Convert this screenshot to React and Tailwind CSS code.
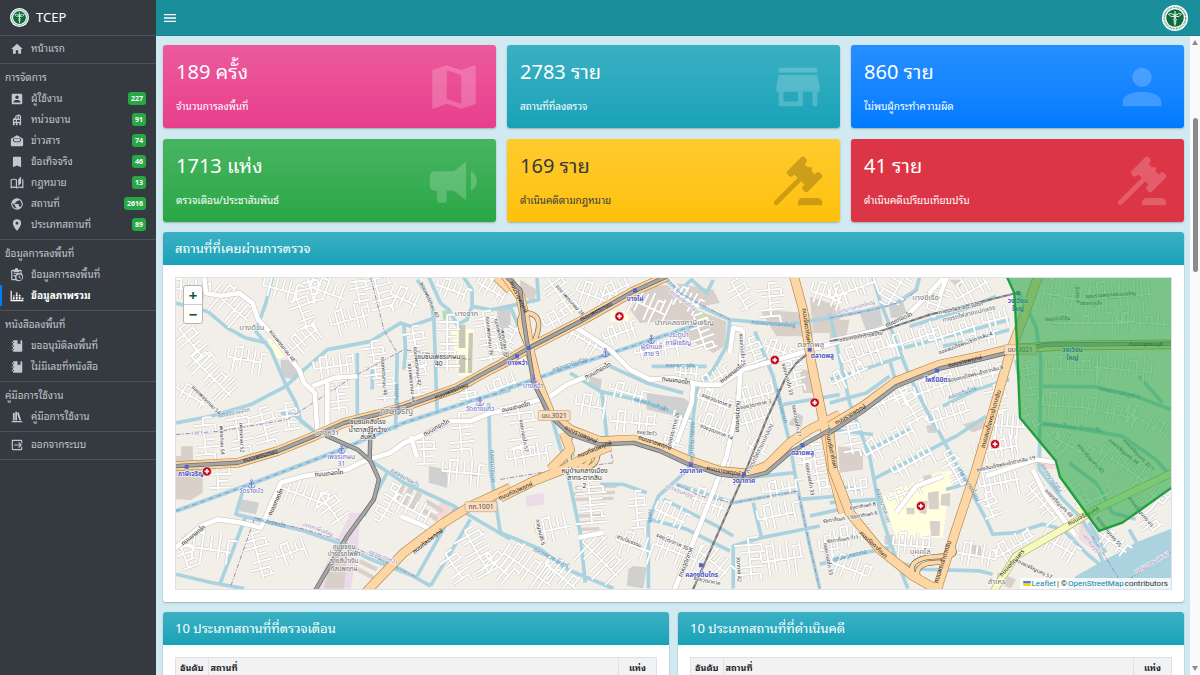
import React, { useState } from 'react';

const ICONS = {
    home: 'M10,20V14H14V20H19V12H22L12,3L2,12H5V20H10Z',
    users: 'M6,17C6,15 10,13.9 12,13.9C14,13.9 18,15 18,17V18H6M15,9A3,3 0 0,1 12,12A3,3 0 0,1 9,9A3,3 0 0,1 12,6A3,3 0 0,1 15,9M3,5V19A2,2 0 0,0 5,21H19A2,2 0 0,0 21,19V5A2,2 0 0,0 19,3H5C3.89,3 3,3.9 3,5Z',
    building: 'M5 21V10L9 8V5L15 2L19 5V21H16V17H13V21H10V17H8V21H5M7 12V15H10V12H7M12 12V15H17V12H12M11 6V10H13V5L11 6M15 5V10H17V6L15 5Z',
    news: 'M12 2L1.5 8V19A2 2 0 0 0 3.5 21H20.5A2 2 0 0 0 22.5 19V8L12 2M5 7.500H19V11.500L16 14H8L5 11.500V7.500M6.500 8.500V11L9 13H15L17.500 11V8.500H6.500Z',
    bookmark: 'M17,3H7A2,2 0 0,0 5,5V21L12,18L19,21V5C19,3.89 18.1,3 17,3Z',
    law: 'M19 1L14 6V17L19 12.5V1M21 5V18.5C19.9 18.15 18.7 18 17.5 18C15.8 18 13.35 18.65 12 19.5V6C10.55 4.9 8.45 4.5 6.5 4.5C4.55 4.5 2.45 4.9 1 6V20.65C1 20.9 1.25 21.15 1.5 21.15C1.6 21.15 1.65 21.1 1.75 21.1C3.1 20.45 5.05 20 6.5 20C8.45 20 10.55 20.4 12 21.5C13.35 20.65 15.8 20 17.5 20C19.15 20 20.85 20.3 22.25 21.05C22.35 21.1 22.4 21.1 22.5 21.1C22.75 21.1 23 20.85 23 20.6V6C22.4 5.55 21.75 5.25 21 5M10 18.41C8.75 18.09 7.5 18 6.5 18C5.44 18 4.18 18.19 3 18.5V7.13C3.91 6.73 5.14 6.5 6.5 6.5C7.86 6.5 9.09 6.73 10 7.13V18.41Z',
    earth: 'M17.9,17.39C17.64,16.59 16.89,16 16,16H15V13A1,1 0 0,0 14,12H8V10H10A1,1 0 0,0 11,9V7H13A2,2 0 0,0 15,5V4.59C17.93,5.77 20,8.64 20,12C20,14.08 19.2,15.97 17.9,17.39M11,19.93C7.05,19.44 4,16.08 4,12C4,11.38 4.08,10.78 4.21,10.21L9,15V16A2,2 0 0,0 11,18M12,2A10,10 0 0,0 2,12A10,10 0 0,0 12,22A10,10 0 0,0 22,12A10,10 0 0,0 12,2Z',
    marker: 'M12,11.5A2.5,2.5 0 0,1 9.5,9A2.5,2.5 0 0,1 12,6.5A2.5,2.5 0 0,1 14.5,9A2.5,2.5 0 0,1 12,11.5M12,2A7,7 0 0,0 5,9C5,14.25 12,22 12,22C12,22 19,14.25 19,9A7,7 0 0,0 12,2Z',
    visits: 'M4 3H8A3 3 0 0 1 14 3H18A2 2 0 0 1 20 5V9.600A7 7 0 1 1 10 21H4A2 2 0 0 1 2 19V5A2 2 0 0 1 4 3M4 5V19H9.100A7 7 0 0 1 9 14H6V12H10A7 7 0 0 1 12 10H6V8H16V9H18V5H16V7H6V5H4M16 11A5 5 0 1 0 16 21A5 5 0 0 0 16 11M15 12.500H16.500V15.800L19 17.300L18.200 18.500L15 16.600V12.500Z',
    chart: 'M1 3H3V19H23V21H1V3M5 11H8V13H5V11M5 14H8V18H5V14M10 6H13V8H10V6M10 9H13V12H10V9M10 13H13V18H10V13M15 10H18V12H15V10M15 13H18V18H15V13M20 15H23V18H20V15Z',
    notebook: 'M3,7V5H5V4C5,2.89 5.9,2 7,2H13V9L15.5,7.5L18,9V2H19C20.05,2 21,2.95 21,4V20C21,21.05 20.05,22 19,22H7C5.95,22 5,21.05 5,20V19H3V17H5V13H3V11H5V7H3M7,11H5V13H7V11M7,7V5H5V7H7M7,19V17H5V19H7Z',
    shelf: 'M9 3V18H12V3H9M12 5L16 18L19 17L15 4L12 5M5 5V18H8V5H5M3 19V21H21V19H3Z',
    logout: 'M14.08,15.59L16.67,13H7V11H16.67L14.08,8.41L15.5,7L20.5,12L15.5,17L14.08,15.59M19,3A2,2 0 0,1 21,5V9.67L19,7.67V5H5V19H19V16.33L21,14.33V19A2,2 0 0,1 19,21H5C3.89,21 3,20.1 3,19V5C3,3.89 3.89,3 5,3H19Z',
    menu: 'M3,6H21V8H3V6M3,11H21V13H3V11M3,16H21V18H3V16Z',
    map: 'M15,19L9,16.89V5L15,7.11M20.5,3C20.44,3 20.39,3 20.34,3L15,5.1L9,3L3.36,4.9C3.15,4.97 3,5.15 3,5.38V20.5A0.5,0.5 0 0,0 3.5,21C3.55,21 3.61,21 3.66,20.97L9,18.9L15,21L20.64,19.1C20.85,19 21,18.85 21,18.62V3.5A0.5,0.5 0 0,0 20.5,3Z',
    store: 'M12,18H6V14H12M21,14V12L20,7H4L3,12V14H4V20H14V14H18V20H20V14M20,4H4V6H20V4Z',
    person: 'M12,4A4,4 0 0,1 16,8A4,4 0 0,1 12,12A4,4 0 0,1 8,8A4,4 0 0,1 12,4M12,14C16.42,14 20,15.79 20,18V20H4V18C4,15.79 7.58,14 12,14Z',
    horn: 'M12,8H4A2,2 0 0,0 2,10V14A2,2 0 0,0 4,16H5V20A1,1 0 0,0 6,21H8A1,1 0 0,0 9,20V16H12L17,20V4L12,8M21.5,12C21.5,13.71 20.54,15.26 19,16V8C20.53,8.75 21.5,10.3 21.5,12Z',
    gavel: 'M2.3,20.28L11.9,10.68L10.5,9.26L9.78,9.97C9.39,10.36 8.76,10.36 8.37,9.97L7.66,9.26C7.27,8.87 7.27,8.24 7.66,7.85L13.32,2.19C13.71,1.8 14.34,1.8 14.73,2.19L15.44,2.9C15.83,3.29 15.83,3.92 15.44,4.31L14.73,5L16.15,6.43C16.54,6.04 17.17,6.04 17.56,6.43C17.95,6.82 17.95,7.46 17.56,7.85L18.97,9.26L19.68,8.55C20.07,8.16 20.71,8.16 21.1,8.55L21.8,9.26C22.19,9.65 22.19,10.28 21.8,10.68L16.15,16.33C15.76,16.72 15.12,16.72 14.73,16.33L14.02,15.63C13.63,15.24 13.63,14.6 14.02,14.21L14.73,13.5L13.32,12.09L3.71,21.7C3.32,22.09 2.69,22.09 2.3,21.7C1.91,21.31 1.91,20.67 2.3,20.28M20,19A2,2 0 0,1 22,21V22H12V21A2,2 0 0,1 14,19H20Z',
};

const MENU = [
    { items: [{ icon: 'home', label: 'หน้าแรก' }] },
    {
        title: 'การจัดการ',
        items: [
            { icon: 'users', label: 'ผู้ใช้งาน', count: 227 },
            { icon: 'building', label: 'หน่วยงาน', count: 91 },
            { icon: 'news', label: 'ข่าวสาร', count: 74 },
            { icon: 'bookmark', label: 'ข้อเท็จจริง', count: 46 },
            { icon: 'law', label: 'กฎหมาย', count: 13 },
            { icon: 'earth', label: 'สถานที่', count: 2616 },
            { icon: 'marker', label: 'ประเภทสถานที่', count: 89 },
        ],
    },
    {
        title: 'ข้อมูลการลงพื้นที่',
        items: [
            { icon: 'visits', label: 'ข้อมูลการลงพื้นที่' },
            { icon: 'chart', label: 'ข้อมูลภาพรวม', active: true },
        ],
    },
    {
        title: 'หนังสือลงพื้นที่',
        items: [
            { icon: 'notebook', label: 'ขออนุมัติลงพื้นที่' },
            { icon: 'notebook', label: 'ไม่มีเลขที่หนังสือ' },
        ],
    },
    { title: 'คู่มือการใช้งาน', items: [{ icon: 'shelf', label: 'คู่มือการใช้งาน' }] },
    { items: [{ icon: 'logout', label: 'ออกจากระบบ' }] },
];

const STATS = [
    { value: '189 ครั้ง', label: 'จำนวนการลงพื้นที่', icon: 'map', tone: 'from-[#ec5a9d] to-[#e83e8c] text-white', iconTone: 'text-white/20' },
    { value: '2783 ราย', label: 'สถานที่ที่ลงตรวจ', icon: 'store', tone: 'from-[#3ab0c3] to-[#17a2b8] text-white', iconTone: 'text-white/20' },
    { value: '860 ราย', label: 'ไม่พบผู้กระทำความผิด', icon: 'person', tone: 'from-[#268fff] to-[#007bff] text-white', iconTone: 'text-white/20' },
    { value: '1713 แห่ง', label: 'ตรวจเตือน/ประชาสัมพันธ์', icon: 'horn', tone: 'from-[#48b461] to-[#28a745] text-white', iconTone: 'text-white/20' },
    { value: '169 ราย', label: 'ดำเนินคดีตามกฎหมาย', icon: 'gavel', tone: 'from-[#ffca2c] to-[#ffc107] text-[#343a40]', iconTone: 'text-black/20' },
    { value: '41 ราย', label: 'ดำเนินคดีเปรียบเทียบปรับ', icon: 'gavel', tone: 'from-[#dc3545] to-[#dc3545] text-white', iconTone: 'text-white/20' },
];

// Three map sheets side by side, each with its own origin.
// streets: [x, y, angle, length, depth, step]
// labels: [x, y, angle, text, kind]
const SHEETS = [
    {
        x: -15,
        areas: [
            ['#ffffe0', 'M290 210L320 190L345 260L310 270Z'],
            ['#ffffe0', 'M840 170L910 180L905 320L865 320Z'],
            ['#ebdbe8', 'M540 730L570 730L560 850L540 958L430 958Z'],
            ['#d9d0c9', 'M480 870L530 850L520 958L460 958ZM15 560L30 560L30 530L65 530L68 600L95 600L95 670L60 692L15 690Z'],
            ['#d0d0d0', 'M330 270L380 270L385 300L370 330L330 320ZM210 690L265 700L255 735L205 725ZM775 590L830 600L830 655L775 640ZM980 120L1020 110L1020 175L985 175Z'],
            ['#c7c7b8', 'M865 165L885 165L885 235L865 235ZM865 255L885 255L885 310L865 310ZM895 190L908 190L905 310L892 310Z'],
            ['#f2dad9', 'M810 690L850 720L830 750L795 740Z'],
            ['#aedfb7', 'M815 122L835 122L835 150L818 150Z'],
            ['#d9d0c9', 'M690 640L705 650L680 700L665 690ZM715 650L730 660L705 710L690 700ZM740 665L755 675L730 725L715 715ZM770 690L820 720L815 732L765 702ZM760 715L805 745L798 757L753 727ZM570 870L622 895L616 907L564 882ZM565 895L612 920L606 932L559 907Z'],
        ],
        canals: [
            'M305 22L285 100L255 185L300 240L345 345L375 400L390 455L430 485',
            'M15 100L110 125L170 175L225 205L290 220',
            'M15 460L120 440L240 405L345 350L400 300L470 240L600 215L690 160L720 170L790 145L780 90L740 30',
            'M700 165L705 240L700 300', 'M790 140L800 430', 'M560 250L560 450', 'M605 300L605 360', 'M680 250L675 480',
            'M775 22L810 100L835 120L860 165L890 150L905 110L960 120L1020 110', 'M905 110L905 60L880 22',
            'M220 650L195 735L400 785L500 820L600 870L740 925', 'M595 570L700 640L850 710L1020 810',
            'M650 610L580 740', 'M955 400L960 600L990 790', 'M740 920L855 715', 'M780 950L900 750',
            'M600 850L780 950', 'M145 950L225 740', 'M15 915L120 940L220 958', 'M330 430L370 435L430 485',
        ],
        ferry: ['M15 725L250 640L500 545L700 460L900 395L1020 360'],
        streets: [
            [60, 60, 5, 150, 28, 22], [180, 110, 40, 130, 45, 20], [330, 60, 15, 110, 34, 20], [390, 120, 70, 110, 30, 22],
            [470, 70, 20, 110, 36, 24], [540, 150, -15, 120, 34, 20], [620, 60, 75, 110, 38, 22], [700, 90, 25, 90, 32, 20],
            [60, 220, 50, 110, 32, 22], [120, 320, 45, 170, 38, 20], [220, 270, 10, 100, 34, 20], [60, 380, 30, 100, 26, 22],
            [400, 210, -40, 90, 28, 18], [490, 290, -8, 120, 30, 20], [610, 270, 82, 110, 30, 20], [735, 230, 80, 120, 28, 20],
            [830, 220, 90, 170, 30, 22], [950, 200, 80, 150, 32, 20], [740, 330, 84, 110, 26, 20], [640, 350, 86, 90, 28, 20],
            [100, 500, 85, 110, 34, 22], [200, 480, 80, 110, 36, 22], [280, 470, 75, 110, 32, 20], [350, 440, 80, 80, 28, 20],
            [140, 620, 88, 90, 34, 20], [400, 680, 20, 150, 36, 24], [480, 720, 55, 100, 34, 22], [260, 860, 75, 140, 34, 22],
            [110, 840, 8, 140, 44, 26], [360, 850, -20, 90, 30, 22], [760, 540, 88, 90, 30, 22], [870, 490, 85, 120, 34, 22],
            [880, 610, 5, 130, 34, 22], [720, 720, 28, 110, 34, 22], [920, 850, 60, 150, 38, 18], [850, 890, 55, 90, 28, 18],
            [980, 890, 40, 90, 34, 18], [660, 700, -60, 130, 26, 20], [40, 860, 70, 100, 28, 22], [1000, 350, -20, 90, 26, 20],
            [420, 60, 75, 90, 26, 20], [560, 60, 80, 90, 26, 20], [840, 60, 20, 90, 26, 18], [960, 60, 30, 90, 28, 18], [890, 380, 80, 60, 24, 18], [500, 370, 84, 110, 28, 20],
        ],
        roads: [
            'M100 22L105 70L150 78L205 70L245 100L262 150L300 190L385 300L400 340L432 370L440 480',
            'M425 350L490 325L560 320', 'M470 340L470 500',
            'M15 835L90 770L140 750L210 760L270 775L330 640L400 620L530 600L580 575L660 550L700 520L760 495L840 455L900 455L960 430L1020 420',
            'M720 500L740 565', 'M690 740L760 770L800 790', 'M580 575L605 575',
        ],
        majors: ['M15 590L200 580L320 545L430 500L520 460L620 435L700 412L860 355L960 300L1020 270', 'M585 970L700 850L820 760L900 710L1020 655', 'M980 22L1020 60'],
        yellow: [],
        rails: ['M15 590L200 580L320 545L430 500L520 460L620 435L700 412L860 355L960 300L1020 270', 'M465 498L560 540L600 575L625 630L610 690L530 800L430 970', 'M597 575L600 470'],
        bounds: ['M15 495L150 485L350 450L550 320L700 240L900 270', 'M180 950L250 750', 'M600 22L640 180L680 250', 'M250 745L400 780L500 810L740 925'],
        pois: [[108, 606]],
        stations: [[47, 592]],
        anchors: [[242, 645], [513, 540], [929, 397]],
        shields: [[932, 712, 'กก.1001']],
        labels: [
            [243, 180, 0, 'บางด้วน', 'place'], [888, 140, 0, 'บางจาก', 'place'], [678, 432, 0, 'ภาษีเจริญ', 'town'], [468, 498, 0, 'บางหว้า', 'place'],
            [805, 268, 0, 'ชุมชนเพชรเกษม', 'area'], [805, 290, 0, '40', 'area'],
            [592, 463, 0, 'ชุมชนคลังโรง', 'area'], [592, 486, 0, 'น้ำตาลบัวกว้าง', 'area'], [592, 508, 0, 'สุ่นหลี', 'area'],
            [520, 838, 0, 'ศูนย์ซ่อม', 'place2'], [520, 860, 0, 'บำรุงรถไฟฟ้า', 'place2'], [520, 882, 0, 'สายสีน้ำเงิน', 'place2'], [520, 904, 0, 'กัลปพฤกษ์', 'place2'],
            [60, 620, 0, 'ภาษีเจริญ', 'station'], [241, 672, 0, 'วัดรางบัว', 'pier'], [512, 570, 0, 'เพชรเกษม', 'pier'], [512, 590, 0, '31', 'pier'], [929, 423, 0, 'วัดอ่างแก้ว', 'pier'],
            [270, 565, -15, 'ถนนเพชรเกษม', 'road'], [845, 370, -22, 'ถนนเพชรเกษม', 'road'], [775, 820, -38, 'ถนนกัลปพฤกษ์', 'road'],
            [475, 617, -5, 'ถนนเทอดไท', 'road'], [800, 480, -28, 'ถนนเทอดไท', 'road'], [320, 700, -65, 'ถนนเทอดไท', 'road'], [70, 802, -38, 'ถนนเทอดไท', 'road'],
            [330, 232, 52, 'ซอยเพชรเกษม 48', 'street'], [102, 395, 45, 'ซอยเพชรเกษม 54', 'street'], [148, 512, 88, 'เพชรเกษม 54', 'street'], [207, 505, 88, 'เพชรเกษม 52', 'street'],
            [635, 320, 86, 'ซอยเพชรเกษม 46', 'street'], [718, 340, 84, 'ซอยเพชรเกษม 44', 'street'], [735, 290, 84, 'ซอยเพชรเกษม 42', 'street'], [952, 200, 84, 'ซอยเพชรเกษม 36', 'street'], [985, 205, 76, 'ซอยเพชรเกษม 34', 'street'], [772, 92, 65, 'ซอยเพชรเกษม 40', 'street'],
            [190, 435, -12, 'คลองบางจาก', 'water'], [675, 390, 88, 'คลองบางหว้า', 'water'], [300, 765, 14, 'คลองรางบัว', 'water'], [700, 630, 30, 'คลองบางหว้า', 'water'], [962, 590, 88, 'คลองบางแวก', 'water'],
            [440, 785, 20, 'เขตภาษีเจริญ', 'border'], [635, 868, 22, 'แขวงบางหว้า', 'border'],
        ],
    },
    {
        x: 975,
        areas: [
            ['#d0d0d0', 'M440 370L550 385L575 400L570 450L440 420ZM270 320L305 330L300 365L265 345ZM385 900L400 890L440 895L430 958L380 950ZM0 130L30 125L30 175L0 165ZM890 430L910 440L905 475L865 465Z'],
            ['#d9d0c9', 'M440 50L500 45L590 120L680 155L675 230L640 250L570 210L540 150L420 160L390 120ZM780 120L930 130L940 200L830 200ZM60 30L110 60L100 100L60 70ZM530 40L640 60L660 100L600 110L560 80ZM900 300L955 300L955 370L910 370ZM930 80L1020 110L1020 190L940 190Z'],
            ['#ffffe0', 'M330 125L385 125L385 155L330 155Z'],
            ['#ebdbe8', 'M75 680L130 670L132 705L80 712Z'],
            ['#aedfb7', 'M205 500L225 560L205 570ZM240 565L280 555L270 590L240 585Z'],
            ['#c8e6a0', 'M600 125L635 145L595 145Z'],
            ['#d9d0c9', 'M225 650L350 645L350 655L225 660ZM215 668L345 664L345 674L215 678ZM225 686L340 682L340 692L225 696ZM235 735L300 733L300 743L235 745ZM240 755L298 753L298 763L240 765ZM240 775L298 773L298 783L240 785Z'],
        ],
        canals: [
            'M490 22L530 60L600 110L690 150L860 165L1020 140', 'M690 150L680 230L640 300L590 360L575 480L565 600L475 680L445 760L445 958',
            'M210 310L300 365L450 400L580 455', 'M305 370L320 500', 'M330 290L440 340L550 370', 'M455 290L620 290',
            'M765 185L820 320L870 520L890 640L930 830L960 958', 'M530 645L700 700L895 665', 'M490 690L650 770L700 800',
            'M760 700L785 805L960 770', 'M700 958L700 830L785 805', 'M150 430L200 600L240 790L255 940',
            'M0 790L120 840L200 900L340 958', 'M745 625L880 610', 'M850 405L1020 375', 'M110 22L115 90L0 115', 'M30 110L75 220', 'M540 60L575 30L620 70L640 30', 'M900 690L1020 680', 'M930 740L1020 720', 'M960 885L1020 870', 'M300 645L370 645L440 670', 'M450 750L560 780L690 845',
        ],
        ferry: ['M0 365L200 295L380 235L590 165'],
        streets: [
            [180, 80, 55, 130, 34, 20], [280, 80, 20, 110, 34, 20], [350, 60, -25, 90, 26, 20], [170, 150, -28, 80, 26, 22], [440, 110, 25, 130, 40, 18],
            [600, 190, 70, 110, 34, 18], [720, 80, 60, 100, 30, 22], [810, 90, 85, 100, 34, 20], [980, 80, 20, 100, 34, 18],
            [250, 210, 30, 120, 28, 20], [360, 190, -20, 100, 26, 18], [470, 240, -10, 130, 26, 18], [560, 310, 5, 70, 20, 16],
            [380, 370, 15, 110, 24, 20], [270, 410, 10, 90, 32, 22], [400, 460, 5, 140, 30, 22], [530, 490, -75, 110, 28, 20],
            [640, 400, 20, 100, 34, 18], [650, 480, 22, 120, 34, 18], [770, 380, -15, 110, 34, 18], [770, 450, -18, 100, 30, 18],
            [760, 250, 70, 90, 26, 18], [880, 300, 75, 100, 26, 20], [60, 470, 82, 130, 40, 26], [80, 560, -10, 120, 30, 24],
            [270, 700, 85, 130, 40, 18], [160, 780, -12, 100, 36, 22], [300, 870, 45, 150, 50, 20], [400, 830, 20, 110, 34, 22],
            [80, 900, 35, 170, 46, 18], [180, 920, 40, 120, 34, 18], [410, 720, 85, 110, 24, 22], [510, 740, 25, 100, 34, 18],
            [530, 850, 22, 130, 38, 18], [620, 700, 20, 110, 34, 20], [640, 880, 40, 110, 34, 20], [750, 870, 85, 130, 36, 22],
            [850, 870, -8, 130, 44, 20], [830, 740, -12, 110, 36, 22], [840, 660, -10, 100, 24, 20], [950, 600, 80, 150, 30, 22],
            [910, 540, 85, 100, 24, 18], [990, 840, -5, 60, 40, 18], [680, 600, -70, 70, 22, 18], [30, 210, -60, 90, 22, 20], [770, 540, 30, 70, 30, 18],
            [830, 240, 20, 80, 24, 16], [560, 90, 30, 90, 28, 16], [640, 330, -30, 90, 24, 18],
        ],
        roads: [
            'M215 165L330 240L390 300L450 330L520 325L600 345L660 345L730 300L800 280L1020 215', 'M0 420L100 395L150 380L200 345L260 320L330 280',
            'M730 180L715 400L680 560L650 640L520 970', 'M730 180L700 175L690 250', 'M235 805L310 790', 'M580 340L575 400L530 520',
        ],
        majors: [
            'M0 285L85 235L250 150L400 65L500 20', 'M0 685L100 635L190 600L260 560L330 530', 'M190 490L210 540L150 600', 'M880 10L910 120L935 280L970 450L1000 620L1030 730',
            'M10 10L60 80L75 150L90 250L110 330L150 430L210 480L300 515L400 510L480 535L560 570L660 605L740 612L800 590L870 520L930 480L1020 435',
        ],
        loops: ['M78 220Q35 130 85 130Q140 140 95 230', 'M210 500Q190 600 245 600Q305 590 290 530', 'M225 570Q245 610 270 570'],
        yellow: [],
        rails: ['M0 285L85 235L250 150L400 65L500 20', 'M20 22L60 60L70 150L85 250L100 340L150 440L210 495L300 525L400 520L480 545L560 582L660 615L740 625L800 610L870 550L930 515L1020 465'],
        tracks: ['M575 970L735 610L800 450L860 320L890 280L920 255'],
        bounds: ['M0 630L180 600', 'M320 500L340 580L260 590', 'M530 645L600 680L700 700L895 665L930 830L960 958', 'M500 22L540 70L690 150'],
        pois: [[358, 140], [825, 271], [945, 399]],
        stations: [[405, 62], [85, 235], [50, 260], [573, 585], [732, 614], [908, 527], [603, 888], [930, 240]],
        anchors: [[100, 330], [316, 250], [454, 210]],
        shields: [[162, 438, 'นบ.3021']],
        labels: [
            [405, 93, 0, 'บางไผ่', 'station'], [52, 286, 0, 'บางหว้า', 'station'], [573, 612, 0, 'วุฒากาศ', 'station'], [732, 641, 0, 'วุฒากาศ', 'station'], [908, 556, 0, 'ตลาดพลู', 'station'], [968, 265, 0, 'ตลาดพลู', 'station'], [605, 922, 0, 'คลองต้นไทร', 'station'],
            [98, 355, 0, 'บางหว้า', 'pier'], [454, 238, 0, 'ผู้รักเมล์', 'pier'], [454, 260, 0, 'สาย 9', 'pier'], [535, 202, 0, 'ประตูน้ำ', 'pier'], [535, 225, 0, 'ภาษีเจริญ', 'pier'],
            [553, 166, 0, 'ปากคลองภาษีเจริญ', 'place'], [933, 233, 0, 'ตลาดพลู', 'place'], [253, 610, 0, 'หมู่บ้านกลางเมือง', 'area'], [253, 633, 0, 'สาทร-ตากสิน', 'area'], [253, 655, 0, '2', 'area'],
            [290, 130, -27, 'ถนนเพชรเกษม', 'road'], [50, 84, 64, 'ถนนราชพฤกษ์', 'road'], [240, 500, 24, 'ถนนราชพฤกษ์', 'road'], [463, 525, 18, 'ถนนราชพฤกษ์', 'road'], [670, 610, 10, 'ถนนราชพฤกษ์', 'road'], [285, 545, -22, 'ถนนกัลปพฤกษ์', 'road'], [48, 670, -24, 'ถนนกัลปพฤกษ์', 'road'],
            [915, 170, 82, 'ถนนรัชดาภิเษก', 'road'], [990, 545, 78, 'ถนนรัชดาภิเษก', 'road'], [527, 338, 8, 'ถนนเทอดไท', 'road'], [295, 308, -28, 'ถนนเทอดไท', 'road'], [48, 418, -14, 'ถนนเทอดไท', 'road'], [700, 315, -38, 'ถนนเทอดไท', 'road'], [708, 440, 92, 'ถนนวุฒากาศ', 'road'], [562, 880, -68, 'ถนนวุฒากาศ', 'road'],
            [205, 95, 48, 'ซอย เพชรเกษม 28', 'street'], [648, 398, 22, 'ซอยวุฒากาศ 8', 'street'], [648, 492, 22, 'ซอยวุฒากาศ 14', 'street'], [768, 410, -12, 'ซอยวุฒากาศ 3', 'street'], [515, 822, 24, 'ซอยวุฒากาศ 36', 'street'], [620, 940, 12, 'ซอยวุฒากาศ', 'street'],
            [65, 500, 80, 'ซอยเทอดไท 57', 'street'], [722, 240, 86, 'ซอยเทอดไท 25', 'street'], [858, 330, 76, 'ซอยเทอดไท 33', 'street'], [885, 455, 80, 'ซอยเทอดไท 21', 'street'], [925, 630, 80, 'ซอยเทอดไท 33', 'street'], [980, 870, 80, 'ซอยเทอดไท 33', 'street'], [115, 790, 76, 'กาญจนสิริ 6', 'street'], [385, 820, 22, 'สามปิยธรรม', 'street'], [440, 495, 5, 'ซอยวัดวัว', 'street'], [525, 480, -75, 'ซอยวุฒากาศ 26', 'street'], [8, 220, 80, 'เพชรเกษม 34', 'street'], [712, 900, 88, 'วุฒากาศ 42', 'street'],
            [820, 168, 4, 'คลองบางกอกใหญ่', 'water'], [210, 290, -18, 'คลองภาษีเจริญ', 'water'], [540, 293, 0, 'คลองลาฮูรัง', 'water'], [450, 410, 18, 'คลองวัดแก้วฟ้า', 'water'], [572, 520, 92, 'คลองบางขุนเทียน', 'water'], [840, 410, 76, 'คลองบางสะแก', 'water'], [445, 740, 92, 'คลอง', 'water'], [150, 870, 26, 'คลองขวางจันทร์', 'water'],
            [545, 95, 35, 'เขตภาษีเจริญ', 'border'], [535, 670, 22, 'เขตจอมทอง', 'border'], [785, 540, -64, 'ทางรถไฟสายแม่กลอง', 'place2'],
        ],
    },
    {
        x: 1965,
        areas: [
            ['#ffffe0', 'M160 680L320 610L365 605L375 650L355 690L340 805L200 808Z'],
            ['#d0d0d0', 'M90 130L150 110L160 165L110 185ZM175 100L220 95L235 140L185 145ZM165 800L195 795L200 830L165 825ZM425 825L455 830L455 860L430 855ZM290 470L320 460L320 490L295 490Z'],
            ['#d9d0c9', 'M25 530L100 540L100 600L30 610ZM400 465L465 445L465 475L430 490ZM295 670L328 665L328 720L298 720ZM335 675L362 670L362 710L333 708ZM270 695L295 695L290 735L270 730ZM300 755L332 755L330 800L305 800ZM230 715L255 715L255 735L232 735ZM280 620L305 615L310 640L285 645ZM0 150L60 150L50 200L0 205ZM1005 890L1050 920L1030 955L1000 935ZM505 910L560 930L545 958L500 940ZM360 30L400 30L390 60Z'],
            ['#f2dad9', 'M610 575L680 575L690 600L620 595ZM750 750L810 790L800 850L750 810Z'],
            ['#ffffa0', 'M735 690L780 735L760 750Z'],
        ],
        river: 'M700 970L740 920L830 870L870 850L920 820L1035 775V970Z',
        canals: [
            'M0 145L100 125L200 100L260 60L270 22', 'M130 22L150 90L240 320L300 440L330 490L400 620L470 750L490 795L560 790L640 765L700 780L780 860L830 900',
            'M340 410L440 360L540 330', 'M180 270L200 340', 'M0 400L110 370L180 320', 'M0 330L100 300L220 260', 'M120 540L240 480', 'M340 230L410 215L540 180', 'M130 630L380 500L470 440', 'M60 400L120 560L150 720L185 830L235 958', 'M0 130L60 400', 'M0 700L140 690', 'M0 650L90 660', 'M170 870L280 900L450 905L490 915', 'M10 870L180 835', 'M0 480L130 495', 'M240 170L400 120L500 80', 'M200 240L430 180L540 150', 'M350 660L420 640',
            'M570 70L620 170L635 270L630 600L700 690L750 740L790 800L830 900', 'M640 350L800 352L920 380L1025 420', 'M640 460L760 480L880 500L980 570L1025 620', 'M720 580L800 640L850 730L920 750', 'M930 320L1000 400', 'M780 760L830 850', 'M560 270L570 330', 'M900 780L940 850',
        ],
        ferry: [],
        streets: [
            [70, 60, -20, 140, 34, 20], [200, 60, -60, 110, 34, 20], [330, 100, -70, 90, 30, 18], [430, 60, -30, 110, 36, 20], [500, 150, -15, 80, 28, 18],
            [120, 250, -20, 170, 36, 22], [250, 210, -18, 150, 30, 20], [370, 190, -18, 150, 28, 20], [60, 320, -25, 120, 28, 18], [450, 210, -12, 90, 20, 18],
            [330, 350, -20, 150, 32, 20], [460, 320, -15, 100, 28, 20], [180, 390, -25, 120, 34, 20], [240, 410, 60, 110, 28, 20], [180, 520, -28, 160, 34, 20],
            [250, 580, -28, 130, 30, 18], [60, 500, 80, 110, 30, 20], [360, 440, -18, 130, 32, 20], [500, 390, 80, 90, 28, 20], [540, 470, 5, 110, 36, 16],
            [500, 540, -10, 130, 34, 16], [510, 640, -12, 120, 40, 16], [480, 710, 70, 80, 24, 18], [370, 600, 60, 110, 28, 18], [60, 660, -8, 110, 30, 18],
            [70, 800, -8, 110, 30, 20], [60, 900, 20, 120, 34, 20], [250, 830, 5, 120, 34, 18], [440, 860, 10, 120, 34, 20], [560, 830, -30, 130, 30, 20],
            [640, 700, 50, 130, 32, 18], [690, 830, 30, 110, 30, 20], [740, 670, 55, 90, 22, 16], [850, 820, 35, 100, 26, 18], [940, 740, 55, 110, 34, 18],
            [700, 80, 10, 160, 44, 22], [880, 80, -5, 190, 46, 22], [780, 160, 0, 220, 26, 18], [940, 160, 4, 160, 26, 18], [730, 300, 2, 160, 34, 22],
            [880, 300, 6, 180, 38, 22], [700, 410, 4, 120, 36, 20], [840, 430, 12, 170, 34, 20], [950, 460, 30, 140, 34, 20], [740, 540, 30, 140, 34, 20],
            [880, 590, 35, 160, 38, 20], [960, 670, 40, 110, 30, 18], [800, 690, -25, 110, 26, 18], [600, 330, 80, 110, 20, 20], [600, 440, 60, 90, 20, 20], [670, 520, 60, 90, 26, 20], [230, 670, -22, 110, 20, 24],
        ],
        roads: ['M0 215L150 180L200 160L240 130L290 80L355 10', 'M355 15L330 80', 'M610 600L650 680L740 800', 'M470 620L620 570L690 580', 'M200 730L260 650L340 620'],
        majors: [
            'M0 490L10 600L60 730L150 840L250 920L320 960', 'M0 470L100 410L200 335L330 285L450 260L540 238L700 228L1030 224',
            'M630 10L580 150L545 240L510 360L440 600L380 780L320 970',
        ],
        loops: ['M258 925Q225 880 290 865L345 860Q385 860 370 835', 'M270 930Q250 895 295 882L335 878'],
        yellow: ['M490 970L560 860L700 780L800 720L1030 610'],
        rails: ['M0 490L100 425L200 350L330 297L450 270L540 248L650 225L1030 222'],
        tracks: ['M0 215L150 185L300 135L560 70'],
        bounds: ['M0 145L130 120L220 95L265 60', 'M790 800L870 930', 'M900 930L1025 850'],
        pois: [[497, 524], [274, 710]],
        stations: [[323, 303], [567, 70]],
        anchors: [],
        shields: [[573, 240, 'นบ.3021']],
        labels: [
            [288, 92, 0, 'บางยี่เรือ', 'place'], [272, 854, 0, 'บุคคโล', 'place'], [502, 945, 0, 'สำเหร่', 'place'], [325, 336, 0, 'โพธิ์นิมิตร', 'station'], [566, 101, 0, 'วงเวียน', 'station'], [566, 124, 0, 'ใหญ่', 'station'], [730, 248, 0, 'วงเวียน', 'station'], [730, 270, 0, 'ใหญ่', 'station'],
            [408, 280, -14, 'ถนนราชพฤกษ์', 'road'], [65, 440, -30, 'ถนนราชพฤกษ์', 'road'], [490, 450, -74, 'ถนนสมเด็จพระเจ้าตากสิน', 'road'], [345, 880, -72, 'ถนนพระเจ้าตากสิน', 'road'], [128, 830, 44, 'ถนนรัชดาภิเษก', 'road'], [765, 745, -28, 'ถนนเจริญนคร', 'road'], [552, 885, -48, 'ถนนเจริญนคร', 'road'], [950, 229, 0, 'ถนนกรุงธนบุรี', 'road'], [210, 155, -25, 'ถนนเทอดไท', 'road'],
            [95, 205, -10, 'ซอยเทอดไทราชธรรม', 'street'], [395, 120, -12, 'ทางรถไฟสายตะวันตก', 'street'], [420, 138, -14, 'ทางรถไฟสายแม่กลอง', 'place2'], [410, 225, -20, 'ซอยสมเด็จพระเจ้าตากสิน 4', 'street'], [440, 318, -14, 'ซอยสมเด็จพระเจ้าตากสิน 8', 'street'], [530, 588, -12, 'ซอยสมเด็จพระเจ้าตากสิน 19', 'street'],
            [100, 715, -10, 'รัชดาภิเษก 8', 'street'], [105, 742, -10, 'รัชดาภิเษก 6', 'street'], [25, 755, -8, 'รัชดาภิเษก 11', 'street'], [40, 815, -8, 'รัชดาภิเษก 7/1', 'street'],
            [845, 80, -4, 'ซอยราชพฤกษ์ร่วมเจริญ', 'street'], [785, 106, 0, 'ตรอกภูเก้า', 'street'], [685, 152, -2, 'ซอยศักดิ์สิน', 'street'], [740, 75, 88, 'อินทร 4', 'street'], [880, 550, 40, 'ซอยเจริญนคร 34', 'street'], [925, 560, 46, 'ซอยเจริญนคร 32/1', 'street'], [780, 570, 48, 'ซอยเจริญนคร 40', 'street'], [930, 730, 52, 'ซอยเจริญนคร 49', 'street'], [685, 705, 46, 'ซอยเจริญนคร 48', 'street'], [615, 905, 26, 'ซอยเจริญนคร 57', 'street'], [835, 790, 52, 'ซอยเจริญนคร 55', 'street'],
            [400, 375, -20, 'คลองต้นไทร', 'water'], [870, 375, 12, 'คลองบางลำภูล่าง', 'water'], [725, 478, 6, 'คลองสมเด็จพระเจ้าตากสิน', 'water'], [660, 630, 58, 'คลองบางไส้ไก่', 'water'], [60, 865, -14, 'คลองสุทธาวาส', 'water'], [155, 710, 72, 'คลองบางสะแก', 'water'], [415, 650, 60, 'คลองบางน้ำชน', 'water'],
            [80, 118, -16, 'เขตบางกอกใหญ่', 'border'], [780, 825, 52, 'เขตธนบุรี', 'border'], [970, 885, -30, 'เขตบางคอแหลม', 'border'],
        ],
    },
];

const LABEL_STYLES = {
    place: { fontSize: 23, fill: '#777', stroke: '#fff' },
    place2: { fontSize: 19, fill: '#666', stroke: '#fff' },
    town: { fontSize: 26, fill: '#777', stroke: '#fff' },
    area: { fontSize: 20, fill: '#333', stroke: '#fff' },
    station: { fontSize: 19, fill: '#4a52c4', stroke: '#fff', fontWeight: 700 },
    pier: { fontSize: 20, fill: '#6a6ac8', stroke: '#fff' },
    road: { fontSize: 18, fill: '#222', stroke: 'none' },
    street: { fontSize: 16, fill: '#333', stroke: '#fff' },
    water: { fontSize: 18, fill: '#5b93b8', stroke: 'none' },
    border: { fontSize: 18, fill: '#a08bb5', stroke: '#fff' },
};

// a spine with side lanes of uneven depth on both sides
const lanes = ([x, y, angle, length, depth, step]) => {
    const rad = (angle * Math.PI) / 180;
    const at = (u, v) => `${Math.round(x + u * Math.cos(rad) - v * Math.sin(rad))} ${Math.round(y + u * Math.sin(rad) + v * Math.cos(rad))}`;
    let d = `M${at(-length / 2, 0)}L${at(length / 2, 0)}`;
    for (let u = -length / 2, i = 0; u <= length / 2; u += step, i++) {
        const up = depth * (0.8 + ((i * 7 + x) % 5) / 8);
        const down = depth * (0.7 + ((i * 5 + y) % 4) / 6);
        d += `M${at(u, -up)}L${at(u, i % 3 ? down : 0)}`;
        if (i % 4 === 1) d += `M${at(u, -up)}L${at(u + step, -up)}`;
    }
    return d;
};

const Layer = ({ children }) => SHEETS.map((s) => (
    <g key={s.x} transform={`translate(${s.x} -24)`}>{children(s)}</g>
));

const CityMap = () => (
    <svg viewBox="0 0 2991 936" preserveAspectRatio="xMidYMid slice" className="block h-full w-full bg-[#f2efe9]" fill="none" strokeLinejoin="round" fontFamily="'Noto Sans', 'Noto Sans Thai', sans-serif">
        <Layer>{(s) => s.areas.map(([fill, d], i) => <path key={i} d={d} fill={fill} />)}</Layer>
        <Layer>{(s) => <path d={s.streets.map(lanes).join('')} stroke="#c9c6c2" strokeWidth="9" />}</Layer>
        <Layer>{(s) => <path d={s.canals.join('')} stroke="#aad3df" strokeWidth="11" />}</Layer>
        <Layer>{(s) => (
            <>
                {s.river && <path d={s.river} fill="#aad3df" />}
                <path d={s.streets.map(lanes).join('')} stroke="#fff" strokeWidth="6" />
                <path d={s.ferry.join('')} stroke="#aad3df" strokeWidth="13" />
                <path d={s.ferry.join('')} stroke="#7fa8e0" strokeWidth="4" strokeDasharray="14 12" />
                <path d={s.bounds.join('')} stroke="#a38bb3" strokeWidth="3" strokeDasharray="14 5 4 5" />
                <path d={s.roads.join('')} stroke="#c5c2be" strokeWidth="17" />
                <path d={s.roads.join('')} stroke="#fff" strokeWidth="14" />
            </>
        )}</Layer>
        <Layer>{(s) => (
            <>
                <path d={s.yellow.join('')} stroke="#b9b56a" strokeWidth="23" />
                <path d={s.yellow.join('')} stroke="#f7fabf" strokeWidth="19" />
                {s.loops && <path d={s.loops.join('')} stroke="#7d6a4b" strokeWidth="16" />}
                <path d={s.majors.join('')} stroke="#b98a4a" strokeWidth="29" />
                {s.loops && <path d={s.loops.join('')} stroke="#fcd6a4" strokeWidth="12" />}
                <path d={s.majors.join('')} stroke="#fcd6a4" strokeWidth="25" />
                <path d={s.rails.join('')} stroke="#666" strokeWidth="13" />
                <path d={s.rails.join('')} stroke="#a5a5a5" strokeWidth="9" />
                {s.tracks && <path d={s.tracks.join('')} stroke="#707070" strokeWidth="6" />}
                {s.tracks && <path d={s.tracks.join('')} stroke="#ccc" strokeWidth="2" strokeDasharray="12 12" />}
            </>
        )}</Layer>
        <Layer>{(s) => (
            <>
                {s.stations.map(([x, y]) => <rect key={`${x}-${y}`} x={x - 6} y={y - 6} width="12" height="12" fill="#5a62c8" />)}
                {s.anchors.map(([x, y]) => (
                    <path key={x} transform={`translate(${x} ${y})`} d="M0 -8V12M-7 -3H7M-11 3Q-9 12 0 12Q9 12 11 3M-3 -11A3 3 0 1 0 3 -11A3 3 0 1 0 -3 -11" stroke="#7c7cd0" strokeWidth="3" />
                ))}
                {s.shields.map(([x, y, text]) => (
                    <g key={text}>
                        <rect x={x - 48} y={y - 15} width="96" height="30" rx="3" fill="#f7dfc6" stroke="#cfa076" strokeWidth="2" />
                        <text x={x} y={y + 7} textAnchor="middle" fontSize="20" fill="#5d4a35">{text}</text>
                    </g>
                ))}
                {s.labels.map(([x, y, angle, text, kind], i) => (
                    <text key={i} transform={`translate(${x} ${y}) rotate(${angle})`} textAnchor="middle" strokeWidth="4" strokeOpacity="0.8" paintOrder="stroke" {...LABEL_STYLES[kind]}>{text}</text>
                ))}
                {s.pois.map(([x, y]) => (
                    <g key={x}>
                        <circle cx={x} cy={y} r="14" fill="#c7081b" stroke="#fff" strokeWidth="2" />
                        <path d={`M${x - 7} ${y}h14M${x} ${y - 7}v14`} stroke="#fff" strokeWidth="5" />
                    </g>
                ))}
            </>
        )}</Layer>
        <path transform="translate(1965 -24)" d="M530 15L555 70L562 200L572 445L680 575L692 622L810 785L880 760L1035 650V15Z" fill="#28a745" fillOpacity="0.6" stroke="#1f9d3f" strokeWidth="7" />
    </svg>
);

const Icon = ({ name, className }) => (
    <svg viewBox="0 0 24 24" fill="currentColor" fillRule={name === 'visits' || name === 'building' || name === 'news' ? 'evenodd' : 'nonzero'} className={className} aria-hidden="true">
        <path d={ICONS[name]} />
    </svg>
);

const Seal = ({ className }) => (
    <svg viewBox="0 0 40 40" className={className} role="img" aria-label="TCEP">
        <circle cx="20" cy="20" r="20" fill="#fff" />
        <circle cx="20" cy="20" r="16.500" fill="none" stroke="#3d8a62" strokeWidth="2.500" strokeDasharray="1.200 1.100" />
        <circle cx="20" cy="20" r="13.500" fill="#0b6b3c" />
        <g fill="none" stroke="#e2f0e6" strokeLinecap="round">
            <path d="M20 10V31" strokeWidth="1.800" />
            <path d="M19 16Q14 11 10 14Q12 19 19 18M21 16Q26 11 30 14Q28 19 21 18" strokeWidth="1.500" />
            <path d="M17 14Q25 17 20 20Q15 23 20 25Q24 27 20 29M23 14Q15 17 20 20Q25 23 20 25Q16 27 20 29" strokeWidth="1.300" />
        </g>
    </svg>
);

const Sidebar = () => (
    <aside className="flex w-[156px] shrink-0 flex-col bg-[#343a40] text-[#c2c7d0]">
        <div className="flex h-9 shrink-0 items-center gap-[7px] border-b border-[#4b545c] pl-2.5 text-[13px] text-white">
            <Seal className="size-[19px]" />
            <span>TCEP</span>
        </div>
        <nav>
            {MENU.map((section, i) => (
                <section key={i} className={`border-b border-[#4b545c] ${section.title ? 'py-1' : 'pt-0.5 pb-1'}`}>
                    {section.title && <h2 className="mb-0.5 h-[18px] pl-[5px] text-[10px] leading-[18px]">{section.title}</h2>}
                    <ul>
                        {section.items.map((item) => (
                            <li key={item.label}>
                                <a href="#" className={`flex h-[21px] items-center border-l-2 pr-2.5 pl-2 text-[10px] ${item.active ? 'border-[#007bff] font-bold text-white' : 'border-transparent'}`}>
                                    <Icon name={item.icon} className="mr-[7px] size-[14px] shrink-0" />
                                    <span className="flex-1 whitespace-nowrap">{item.label}</span>
                                    {item.count && <span className="rounded-[3px] bg-[#28a745] px-[3px] text-[7px] leading-[13px] font-bold text-white">{item.count}</span>}
                                </a>
                            </li>
                        ))}
                    </ul>
                </section>
            ))}
        </nav>
    </aside>
);

const StatCard = ({ value, label, icon, tone, iconTone }) => (
    <div className={`flex h-[83px] items-center justify-between rounded-[3px] bg-linear-to-b px-[13px] shadow-[0_1px_2px_rgba(0,0,0,0.25)] ${tone}`}>
        <div className="flex h-full flex-col justify-between pt-3 pb-3.5">
            <h3 className="text-[20px] leading-[30px]">{value}</h3>
            <p className="text-[10px] leading-4">{label}</p>
        </div>
        <Icon name={icon} className={`size-[58px] ${iconTone}`} />
    </div>
);

const Panel = ({ title, children }) => (
    <section className="overflow-hidden rounded-[3px] bg-white shadow-[0_1px_2px_rgba(0,0,0,0.25)]">
        <h2 className="h-[33px] bg-linear-to-b from-[#3ab0c3] to-[#17a2b8] px-3 text-[13px] leading-[33px] text-white">{title}</h2>
        <div className="p-3">{children}</div>
    </section>
);

const RankTable = () => (
    <table className="w-full border-collapse text-left text-[9px] text-[#212529]">
        <thead>
            <tr className="h-5 bg-[#f2f2f2]">
                <th className="w-8 border border-[#dee2e6] px-1">อันดับ</th>
                <th className="border border-[#dee2e6] px-0.5">สถานที่</th>
                <th className="w-[38px] border border-[#dee2e6] text-center">แห่ง</th>
            </tr>
        </thead>
    </table>
);

const App = () => {
    const [open, setOpen] = useState(true);

    return (
        <div className="flex h-screen overflow-hidden bg-[#d1eaf1] font-['Noto_Sans','Noto_Sans_Thai_Looped','Noto_Looped_Thai','Loma','Garuda','Waree',sans-serif]">
            {open && <Sidebar />}
            <div className="flex min-w-0 flex-1 flex-col">
                <header className="flex h-9 shrink-0 items-center justify-between border-b border-[#17808c] bg-[#1a8f9b] pr-3 pl-1.5 text-white">
                    <button type="button" aria-label="Menu" onClick={() => setOpen(!open)}>
                        <Icon name="menu" className="size-4" />
                    </button>
                    <Seal className="size-[26px]" />
                </header>

                <div className="flex min-h-0 flex-1">
                    <main className="flex min-w-0 flex-1 flex-col gap-2.5 overflow-hidden pt-[9px] pr-1.5 pl-[7px]">
                        <div className="grid shrink-0 grid-cols-3 gap-[11px]">
                            {STATS.map((s) => <StatCard key={s.label} {...s} />)}
                        </div>

                        <div className="shrink-0">
                            <Panel title="สถานที่ที่เคยผ่านการตรวจ">
                                <div className="relative aspect-[997/313] border border-[#dee2e6]">
                                    <CityMap />
                                    <div className="absolute top-[7px] left-[7px] flex w-5 flex-col divide-y divide-[#ccc] rounded-[3px] border border-[#b5b5b5] bg-white text-[15px] leading-[18px] font-bold text-[#0b5a34]">
                                        <button type="button" aria-label="Zoom in">+</button>
                                        <button type="button" aria-label="Zoom out">−</button>
                                    </div>
                                    <div className="absolute right-0 bottom-0 flex items-center bg-white/80 px-[3px] font-['Roboto',sans-serif] text-[8px] leading-[11px] text-[#333]">
                                        <svg viewBox="0 0 12 8" className="mr-px h-[5px] w-2" aria-hidden="true">
                                            <path fill="#4C7BE1" d="M0 0h12v4H0z" />
                                            <path fill="#FFD500" d="M0 4h12v4H0z" />
                                        </svg>
                                        <a href="#" className="text-[#17859f]">Leaflet</a>
                                        <span className="mx-px">| ©</span>
                                        <a href="#" className="text-[#17859f]">OpenStreetMap</a>
                                        <span className="ml-px">contributors</span>
                                    </div>
                                </div>
                            </Panel>
                        </div>

                        <div className="grid shrink-0 grid-cols-2 gap-[9px]">
                            <Panel title="10 ประเภทสถานที่ที่ตรวจเตือน"><RankTable /></Panel>
                            <Panel title="10 ประเภทสถานที่ที่ดำเนินคดี"><RankTable /></Panel>
                        </div>
                    </main>

                    {/* scroll track */}
                    <div className="flex w-2.5 shrink-0 flex-col items-center bg-[#fafafa] py-1" aria-hidden="true">
                        <svg viewBox="0 0 6 5" className="h-[5px] w-1.5 fill-[#8b8b8b]"><path d="M3 0L6 5H0z" /></svg>
                        <div className="flex min-h-0 w-full flex-1 flex-col items-center">
                            <div className="min-h-0 grow-[73]" />
                            <div className="w-[5px] grow-[154] rounded-full bg-[#8b8b8b]" />
                            <div className="min-h-0 grow-[393]" />
                        </div>
                        <svg viewBox="0 0 6 5" className="h-[5px] w-1.5 fill-[#8b8b8b]"><path d="M3 5L6 0H0z" /></svg>
                    </div>
                </div>
            </div>
        </div>
    );
};

export default App;
